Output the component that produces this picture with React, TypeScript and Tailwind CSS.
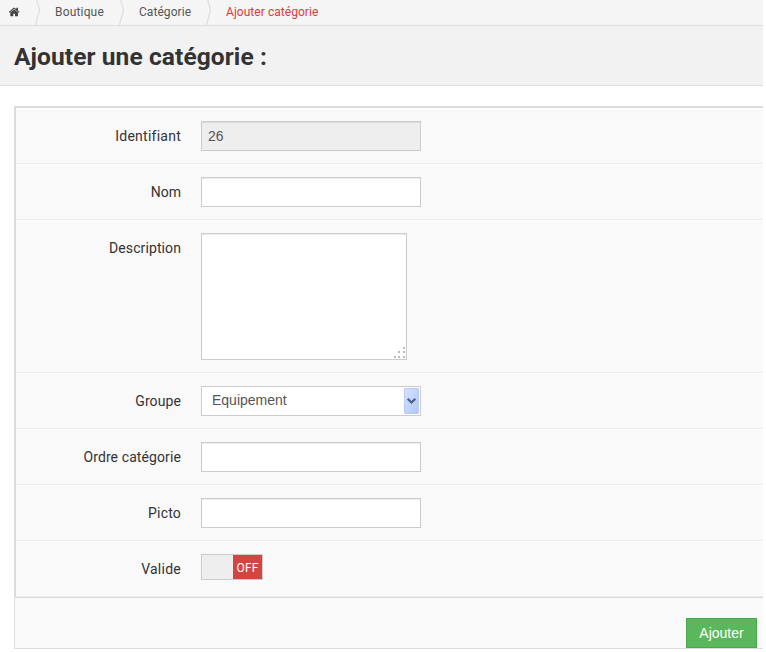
import type { ReactNode } from "react";

function HomeIcon() {
  return (
    <svg className="mt-[6px] ml-[9px] h-3 w-3 shrink-0" viewBox="64 0 1792 1792" fill="#444444">
      <path d="M1408 992v480q0 26-19 45t-45 19h-384v-384h-256v384h-384q-26 0-45-19t-19-45v-480q0-1 .5-3t.5-3l575-474 575 474q1 2 1 6zm223-69l-62 74q-8 9-21 11h-3q-13 0-21-7l-692-577-692 577q-12 8-24 7-13-2-21-11l-62-74q-8-10-7-23.5t11-21.5l719-599q32-26 76-26t76 26l244 204v-195q0-14 9-23t23-9h192q14 0 23 9t9 23v408l219 182q10 8 11 21.5t-7 23.5z" />
    </svg>
  );
}

function Crumb({ label, className }: { label: string; className: string }) {
  return <span className={`ml-[14px] shrink-0 whitespace-nowrap ${className}`}>{label}</span>;
}

function Separator() {
  return (
    <svg className="ml-[14px] h-[25px] w-[6px] shrink-0" viewBox="0 0 6 25" fill="none">
      <path d="M1.8 0 L4.5 10 L0.5 25" stroke="#dddddd" strokeWidth="1.2" />
    </svg>
  );
}

function Row({
  label,
  tall,
  tracking = "tracking-[0.1px]",
  children,
}: {
  label: string;
  tall?: boolean;
  tracking?: string;
  children: ReactNode;
}) {
  return (
    <div
      className={`flex border-t border-b border-t-white border-b-[#ebebeb] pt-3 ${tall ? "h-[153px]" : "h-14"}`}
    >
      <label
        className={`mr-5 w-[165px] shrink-0 pt-[5px] text-right text-[14px] leading-5 text-[#333] ${tracking}`}
      >
        {label}
      </label>
      {children}
    </div>
  );
}

const field =
  "h-[30px] w-[220px] border border-[#ccc] px-1.5 font-['Liberation_Sans',Arial,sans-serif] text-[14px] leading-5 text-[#555] outline-none shadow-[inset_0_1px_1px_rgba(0,0,0,0.075)]";

export default function App() {
  return (
    <div className="h-[652px] w-[766px] overflow-hidden bg-white font-['Roboto',sans-serif]">
      <div className="w-[763px]">
        <nav className="flex h-[26px] items-start border-b border-[#ddd] bg-[#f5f5f5] text-[12px] leading-[24px] text-[#555]">
          <HomeIcon />
          <Separator />
          <Crumb label="Boutique" className="w-[50px] tracking-[0.17px]" />
          <Separator />
          <Crumb label="Catégorie" className="w-[53px] tracking-[0.06px]" />
          <Separator />
          <Crumb label="Ajouter catégorie" className="tracking-[0.05px] text-[#d9403a]" />
        </nav>

        <header className="h-[60px] border-b border-[#ddd] bg-[#f2f2f2] pl-[14px]">
          <h1 className="pt-[11px] text-[24.5px] leading-10 font-bold tracking-[0.1px] whitespace-nowrap text-[#333]">
            Ajouter une catégorie :
          </h1>
        </header>

        <form className="mt-5 ml-[14px] border-t border-l border-[#ddd] bg-[#f9f9f9]">
          <div className="border-t border-b border-l border-[#dadada]">
            <Row label="Identifiant" tracking="tracking-[0.25px]">
              <input className={`${field} bg-[#eee]`} defaultValue="26" readOnly />
            </Row>
            <Row label="Nom" tracking="tracking-normal">
              <input className={`${field} bg-white`} />
            </Row>
            <Row label="Description" tall>
              <div className="relative h-[127px] w-[206px]">
                <textarea className="block h-full w-full resize-none border border-[#ccc] bg-white p-1.5 text-[14px] shadow-[inset_0_1px_1px_rgba(0,0,0,0.075)] outline-none" />
                <svg className="absolute right-[1px] bottom-[1px] h-3 w-3" viewBox="0 0 12 12" fill="#bbbbbb">
                  <rect x="9" y="0" width="2" height="2" />
                  <rect x="4" y="4" width="2" height="2" />
                  <rect x="9" y="4" width="2" height="2" />
                  <rect x="0" y="9" width="2" height="2" />
                  <rect x="4" y="9" width="2" height="2" />
                  <rect x="9" y="9" width="2" height="2" />
                </svg>
              </div>
            </Row>
            <Row label="Groupe">
              <div className="flex h-[30px] w-[220px] justify-between border border-[#ccc] bg-white p-px font-['Liberation_Sans',Arial,sans-serif] text-[14px] text-[#555]">
                <span className="pl-[9px] leading-[25px]">Equipement</span>
                <span className="flex h-[26px] w-[15px] items-center justify-center rounded-[1px] border border-[#b9cbf3] bg-gradient-to-br from-[#d3e2ff] to-[#b2c8f8]">
                  <svg className="h-[6px] w-[9px] shrink-0" viewBox="0 0 9 6" fill="none">
                    <path d="M0.7 0.8 L4.5 4.5 L8.3 0.8" stroke="#4d6185" strokeWidth="2.2" />
                  </svg>
                </span>
              </div>
            </Row>
            <Row label="Ordre catégorie">
              <input className={`${field} bg-white`} />
            </Row>
            <Row label="Picto" tracking="tracking-[0.2px]">
              <input className={`${field} bg-white`} />
            </Row>
            <Row label="Valide" tracking="tracking-[0.25px]">
              <div className="flex h-[26px] w-[62px] border border-[#ccc] bg-[#eee]">
                <span className="ml-auto w-[29px] bg-[#d14641] text-center text-[12px] leading-[26px] tracking-[0.2px] text-white">
                  OFF
                </span>
              </div>
            </Row>
          </div>
          <div className="flex h-[51px] justify-end border-b border-[#ddd] pt-5 pr-[6px]">
            <button
              type="button"
              className="h-[30px] w-[71px] border border-[#4ca64c] bg-[#5bb75b] font-['Liberation_Sans',Arial,sans-serif] text-[14px] leading-[28px] text-white"
            >
              Ajouter
            </button>
          </div>
        </form>
      </div>
    </div>
  );
}
